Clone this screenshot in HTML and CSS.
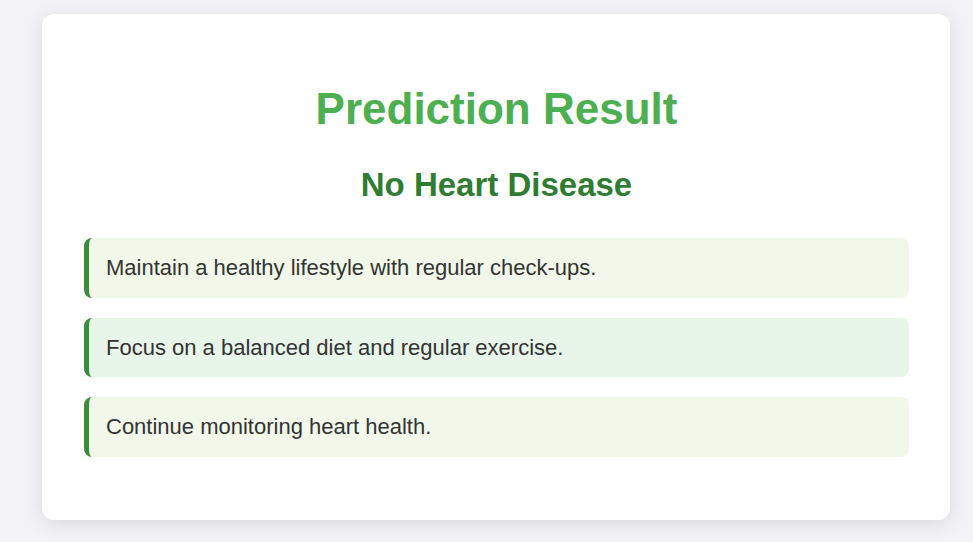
FILE: index.html
```html
<!DOCTYPE html>
<html>
<head>
<meta charset="utf-8">
<title>Prediction Result</title>
<link rel="stylesheet" href="styles.css">
</head>
<body>
<div class="card">
  <h1 class="title">Prediction Result</h1>
  <h2 class="result">No Heart Disease</h2>
  <div class="tips">
    <div class="tip">Maintain a healthy lifestyle with regular check-ups.</div>
    <div class="tip">Focus on a balanced diet and regular exercise.</div>
    <div class="tip">Continue monitoring heart health.</div>
  </div>
</div>
</body>
</html>
```
FILE: styles.css
```css
html, body {
  margin: 0;
  padding: 0;
}
body {
  background: #f3f3f7;
  font-family: "Liberation Sans", Arial, sans-serif;
  padding: 14px 0 0 42px;
  min-height: 542px;
  box-sizing: border-box;
}
.card {
  width: 908px;
  box-sizing: border-box;
  background: #ffffff;
  border-radius: 12px;
  box-shadow: 0 4px 20px rgba(0, 0, 0, 0.1);
  padding: 70px 41px 63px 42px;
}
.title {
  margin: 0;
  text-align: center;
  color: #4caf50;
  font-size: 44px;
  font-weight: bold;
}
.result {
  margin: 32px 0 34px;
  text-align: center;
  color: #2e7d32;
  font-size: 33px;
  font-weight: bold;
}
.tips {
  display: flex;
  flex-direction: column;
  gap: 20px;
}
.tip {
  background: #f1f8e9;
  border-left: 5px solid #388e3c;
  border-radius: 8px;
  padding: 17px 17px;
  font-size: 22px;
  line-height: 25.5px;
  color: #333333;
}
.tip:nth-child(even) {
  background: #e8f5e9;
}
```
